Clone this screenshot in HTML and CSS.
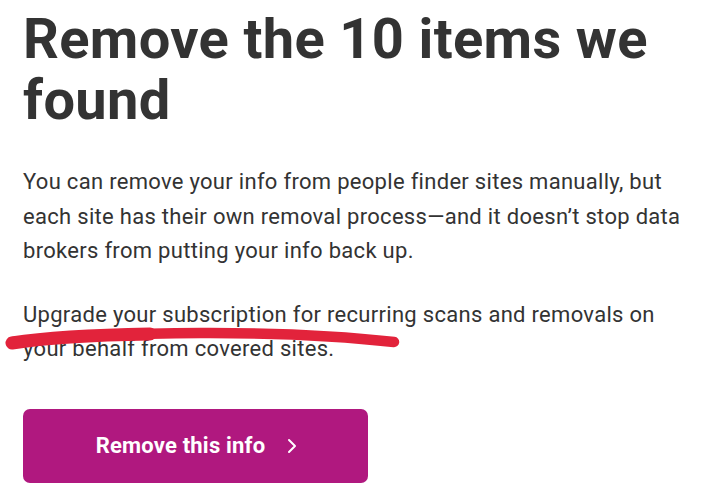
FILE: index.html
```html
<!DOCTYPE html>
<html>
<head>
<meta charset="utf-8">
<link rel="stylesheet" href="styles.css">
</head>
<body>
<main class="page">
  <h1 class="title">Remove the 10 items we found</h1>
  <p class="text">You can remove your info from people finder sites manually, but each site has their own removal process—and it doesn’t stop data brokers from putting your info back up.</p>
  <p class="text upgrade">Upgrade your subscription for recurring scans and removals on your behalf from covered sites.
    <svg class="scribble" width="410" height="34" viewBox="0 0 410 34"><path d="M13 19 C 120 8, 280 6, 394 19" stroke="#e2233b" stroke-width="10.5" stroke-linecap="round" fill="none"/><path d="M12 20 C 50 14, 90 12, 150 11" stroke="#e2233b" stroke-width="13" stroke-linecap="round" fill="none"/></svg>
  </p>
  <button class="btn"><span>Remove this info</span><svg class="chev" width="10" height="16" viewBox="0 0 10 16"><path d="M2 2 L8 8 L2 14" stroke="#fff" stroke-width="2" fill="none" stroke-linecap="round" stroke-linejoin="round"/></svg></button>
</main>
</body>
</html>
```
FILE: styles.css
```css
html, body { margin: 0; padding: 0; background: #fff; }
body { font-family: Roboto, "Noto Sans", sans-serif; color: #333; }
.page { padding: 9px 0 0 23px; width: 680px; }
.title { margin: 0; font-size: 56px; font-weight: 700; line-height: 61px; letter-spacing: 0.35px; color: #333; }
.text { margin: 34px 0 0; width: 670px; font-size: 22px; line-height: 34.5px; letter-spacing: 0.3px; color: #333; }
.upgrade { position: relative; margin-top: 29px; }
.scribble { position: absolute; left: -23px; top: 25px; }
.btn { display: flex; align-items: center; justify-content: center; gap: 22px; margin-top: 42px; width: 345px; height: 74px; border: none; border-radius: 7px; background: #b0187f; color: #fff; font-family: Roboto, sans-serif; font-size: 22px; font-weight: 700; letter-spacing: 0.2px; padding: 0 0 0 2px; }
.chev { display: block; }
```
